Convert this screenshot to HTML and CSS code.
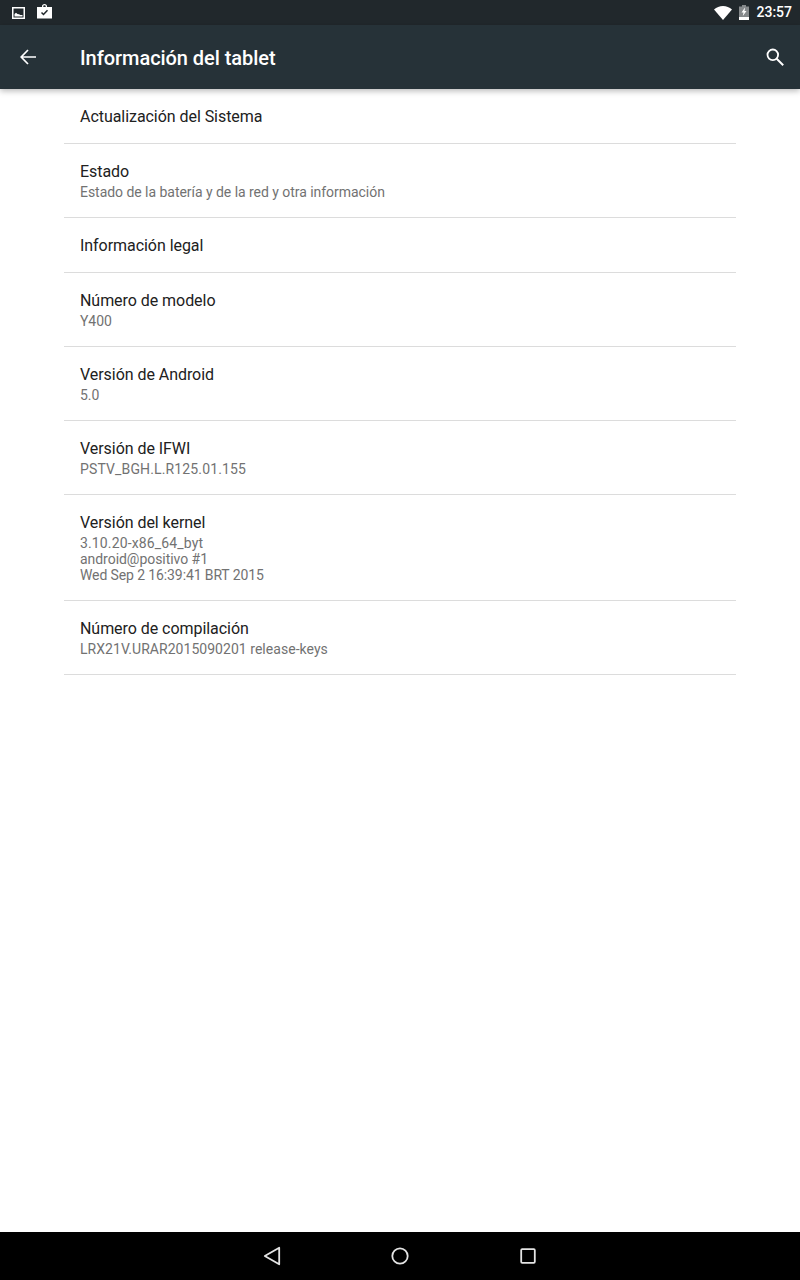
FILE: index.html
```html
<!DOCTYPE html>
<html lang="es">
<head>
<meta charset="utf-8">
<title>Información del tablet</title>
<link rel="stylesheet" href="styles.css">
</head>
<body>
<div class="screen">
  <div class="statusbar">
    <div class="status-left">
      <svg class="ic13" viewBox="0 0 13 13"><path fill="#fff" fill-rule="evenodd" d="M0 1h13v12H0zM1.500 2.500v9h10v-9z"/><path fill="#fff" d="M2.500 10.500V8l1.500-1.200L5.500 8l1.500.3 1.300.7h2.200v1.500z"/></svg>
      <svg class="ic15" viewBox="0 0 15 15"><path fill="#fff" fill-rule="evenodd" d="M5 3V2.200C5 1 6 0 7.500 0S10 1 10 2.200V3h5v11.500H0V3zM6.300 3h2.400V2.200c0-.5-.5-.9-1.200-.9s-1.200.4-1.200.9z"/><path fill="none" stroke="#21282c" stroke-width="1.500" d="M4.500 8.500l2 2 4-4.200"/></svg>
    </div>
    <div class="status-right">
      <svg class="wifi" viewBox="0 0 18 14"><path fill="#fff" d="M9 14L0 3.500C2.500 1.300 5.600 0 9 0s6.500 1.300 9 3.500z"/></svg>
      <svg class="battery" viewBox="0 0 10 15"><path fill="#fff" fill-opacity=".45" d="M3 0h4v1.500h3V12H0V1.500h3z"/><path fill="#fff" d="M0 12h10v3H0z"/><path fill="#fff" d="M6 2.500L2.500 7.500h2L3.800 11 7.500 6h-2z"/></svg>
      <span class="time">23:57</span>
    </div>
  </div>
  <header class="toolbar">
    <svg class="back" viewBox="0 0 16 16"><path fill="none" stroke="#fff" stroke-width="1.700" d="M16 8H1.500M8 1L1.200 8 8 15"/></svg>
    <h1 class="title">Información del tablet</h1>
    <svg class="search" viewBox="0 0 18 18"><circle cx="6.800" cy="6.800" r="5.300" fill="none" stroke="#fff" stroke-width="1.800"/><path fill="none" stroke="#fff" stroke-width="2" d="M10.700 10.700l6.500 6.500"/></svg>
  </header>
  <main class="content">
    <ul class="list">
      <li class="row"><div class="row-title">Actualización del Sistema</div></li>
      <li class="row"><div class="row-title">Estado</div><div class="row-sub">Estado de la batería y de la red y otra información</div></li>
      <li class="row"><div class="row-title">Información legal</div></li>
      <li class="row"><div class="row-title">Número de modelo</div><div class="row-sub">Y400</div></li>
      <li class="row"><div class="row-title">Versión de Android</div><div class="row-sub">5.0</div></li>
      <li class="row"><div class="row-title">Versión de IFWI</div><div class="row-sub wide">PSTV_BGH.L.R125.01.155</div></li>
      <li class="row"><div class="row-title">Versión del kernel</div><div class="row-sub"><span class="line wide">3.10.20-x86_64_byt</span><span class="line">android@positivo #1</span><span class="line narrow">Wed Sep 2 16:39:41 BRT 2015</span></div></li>
      <li class="row"><div class="row-title">Número de compilación</div><div class="row-sub wide-less">LRX21V.URAR2015090201 release-keys</div></li>
    </ul>
  </main>
  <nav class="navbar">
    <svg class="nav-ic" viewBox="0 0 20 20"><path fill="none" stroke="#e4e4e4" stroke-width="1.800" stroke-linejoin="round" d="M17.200 1.700v16.600L2.800 10z"/></svg>
    <svg class="nav-ic" viewBox="0 0 20 20"><circle cx="10" cy="10" r="7.700" fill="none" stroke="#e4e4e4" stroke-width="1.800"/></svg>
    <svg class="nav-ic" viewBox="0 0 20 20"><rect x="3.200" y="3.200" width="13.600" height="13.600" rx="1" fill="none" stroke="#e4e4e4" stroke-width="1.800"/></svg>
  </nav>
</div>
</body>
</html>
```
FILE: styles.css
```css
* { box-sizing: border-box; }
html, body { margin: 0; padding: 0; }
body { font-family: Roboto, "Liberation Sans", sans-serif; background: #fff; }
.screen { width: 800px; height: 1280px; display: flex; flex-direction: column; overflow: hidden; }
.statusbar { height: 25px; background: #21282c; display: flex; justify-content: space-between; align-items: center; padding: 0 8px 0 12px; flex: none; }
.status-left { display: flex; align-items: center; gap: 12px; }
.ic13 { width: 13px; height: 13px; display: block; }
.ic15 { width: 15px; height: 15px; display: block; margin-bottom: 2px; }
.status-right { display: flex; align-items: center; }
.wifi { width: 18px; height: 14px; display: block; }
.battery { width: 10px; height: 15px; display: block; margin-left: 7px; }
.time { color: #fff; font-size: 14px; font-weight: 500; margin-left: 7px; line-height: 25px; }
.toolbar { height: 64px; background: #263238; display: flex; align-items: center; padding: 0 16px 0 20px; flex: none; box-shadow: 0 2px 6px rgba(0,0,0,.28); position: relative; }
.back { width: 16px; height: 16px; display: block; }
.title { flex: 1; margin: 0 0 0 44px; padding-top: 2px; color: #fff; font-size: 20px; font-weight: 500; line-height: 28px; letter-spacing: -0.05px; }
.search { width: 18px; height: 18px; display: block; }
.content { flex: 1; padding: 0 64px; }
.list { list-style: none; margin: 0; padding: 0; }
.row { padding: 17px 16px 15px; border-bottom: 1px solid #dcdcdc; }
.row-title { font-size: 16px; line-height: 22px; color: #212121; letter-spacing: -0.05px; }
.row-sub { font-size: 14px; line-height: 16px; margin: 1px 0 2px; color: #727272; letter-spacing: -0.04px; }
.line { display: block; }
.wide { letter-spacing: 0.14px; }
.wide-less { letter-spacing: 0.04px; }
.narrow { letter-spacing: -0.11px; }
.navbar { height: 48px; background: #000; display: flex; justify-content: center; align-items: center; gap: 108px; flex: none; }
.nav-ic { width: 20px; height: 20px; display: block; }
```
